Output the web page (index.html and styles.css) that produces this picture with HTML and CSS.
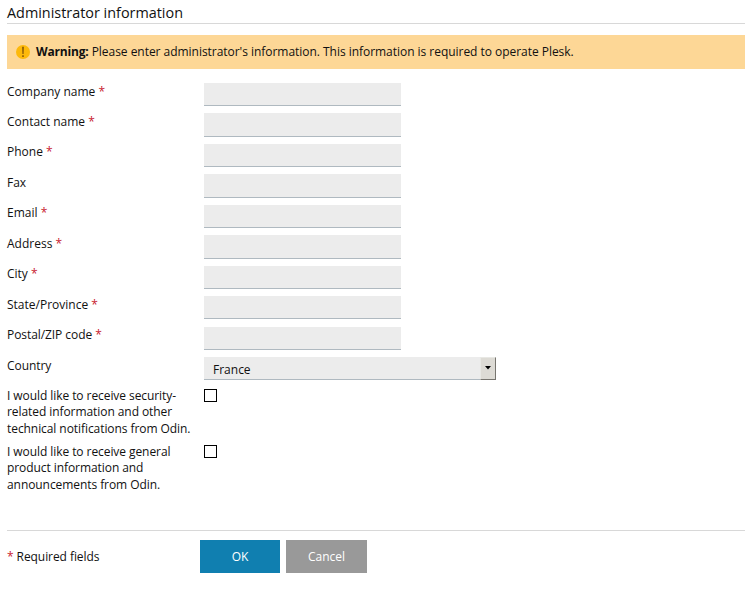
FILE: index.html
```
<!DOCTYPE html>
<html lang="en">
<head>
<meta charset="utf-8">
<title>Administrator information</title>
<link rel="stylesheet" href="styles.css">
</head>
<body>
<form class="page">
  <h1 class="title">Administrator information</h1>
  <div class="warning">
    <svg class="warning-icon" width="14" height="14" viewBox="0 0 14 14"><circle cx="7" cy="7" r="7" fill="#fdb90b"/><path d="M6.1 1.8h1.8L7.6 9H6.4zM6.2 10.2h1.6v1.7H6.2z" fill="#8a5a08"/></svg>
    <p><b>Warning:</b> Please enter administrator's information. This information is required to operate Plesk.</p>
  </div>
  <div class="fields">
    <div class="row"><label for="company">Company name <i>*</i></label><input class="text" id="company"></div>
    <div class="row"><label for="contact">Contact name <i>*</i></label><input class="text" id="contact"></div>
    <div class="row"><label for="phone">Phone <i>*</i></label><input class="text" id="phone"></div>
    <div class="row"><label for="fax">Fax</label><input class="text" id="fax"></div>
    <div class="row"><label for="email">Email <i>*</i></label><input class="text" id="email"></div>
    <div class="row"><label for="address">Address <i>*</i></label><input class="text" id="address"></div>
    <div class="row"><label for="city">City <i>*</i></label><input class="text" id="city"></div>
    <div class="row"><label for="state">State/Province <i>*</i></label><input class="text" id="state"></div>
    <div class="row"><label class="tight" for="zip">Postal/ZIP code <i>*</i></label><input class="text" id="zip"></div>
    <div class="row"><label class="tight">Country</label>
      <div class="select"><span class="value">France</span><span class="arrow"><svg width="6" height="4" viewBox="0 0 6 4"><path d="M0 0h6L3 3.6z" fill="#000"/></svg></span></div>
    </div>
    <div class="row check-row"><label class="tight" for="security">I would like to receive security-related information and other technical notifications from Odin.</label><input class="check" type="checkbox" id="security"></div>
    <div class="row check-row"><label class="tight" for="general">I would like to receive general product information and announcements from Odin.</label><input class="check" type="checkbox" id="general"></div>
  </div>
  <div class="footer">
    <span class="required tight"><i>*</i> Required fields</span>
    <button class="button ok" type="button">OK</button>
    <button class="button cancel" type="button">Cancel</button>
  </div>
</form>
</body>
</html>
```
FILE: styles.css
```
* { box-sizing: border-box; }
body {
  margin: 0;
  background: #fff;
  color: #111;
  font: 12px/16.5px "Open Sans", sans-serif;
}
.page { width: 738px; margin-left: 7px; }
.title {
  height: 24px;
  margin: 0;
  padding-top: 3px;
  border-bottom: 1px solid #d8d8d8;
  font-size: 14.4px;
  font-weight: 400;
  line-height: 20px;
}
.warning {
  display: flex;
  align-items: center;
  height: 34px;
  margin-top: 11px;
  padding-left: 9px;
  background: #fdd796;
}
.warning-icon { margin-right: 6px; }
.warning p { margin: 0; letter-spacing: -0.035px; }
.warning b { letter-spacing: -0.17px; }
i { color: #c8202f; font-style: normal; }
.tight { letter-spacing: -0.07px; }
.fields { padding-top: 14px; }
.row {
  display: grid;
  grid-template-columns: 197px auto;
  justify-content: start;
  align-items: start;
  height: 30.45px;
}
.row label { padding: 0.62px 10px 0 0; }
.text {
  width: 197px;
  height: 23.4px;
  padding: 0 8px;
  border: 0;
  border-bottom: 1px solid #afb9c0;
  border-radius: 0;
  background: #ececec;
}
.select {
  display: flex;
  width: 292px;
  height: 23px;
  border-bottom: 1px solid #afb9c0;
  background: #ececec;
}
.value { flex: 1; padding: 5px 9px 0; }
.arrow {
  display: flex;
  align-items: center;
  justify-content: center;
  width: 16px;
  height: 23px;
  border: 1px solid;
  border-color: #e8e8e4 #77756f #77756f #e8e8e4;
  background: #dddbd5;
}
.check-row { height: 56px; }
.check {
  appearance: none;
  width: 13px;
  height: 13px;
  margin: 2px 0 0;
  border: 1px solid #000;
  background: #fff;
}
.footer {
  display: flex;
  align-items: center;
  margin-top: 31px;
  padding-top: 9px;
  border-top: 1px solid #d8d8d8;
}
.required { width: 193px; }
.button {
  width: 80px;
  height: 33px;
  padding: 0;
  border: 0;
  color: #fff;
  font: inherit;
}
.ok { margin-right: 6px; background: #107fb0; }
.cancel { width: 81px; background: #999; }
```
